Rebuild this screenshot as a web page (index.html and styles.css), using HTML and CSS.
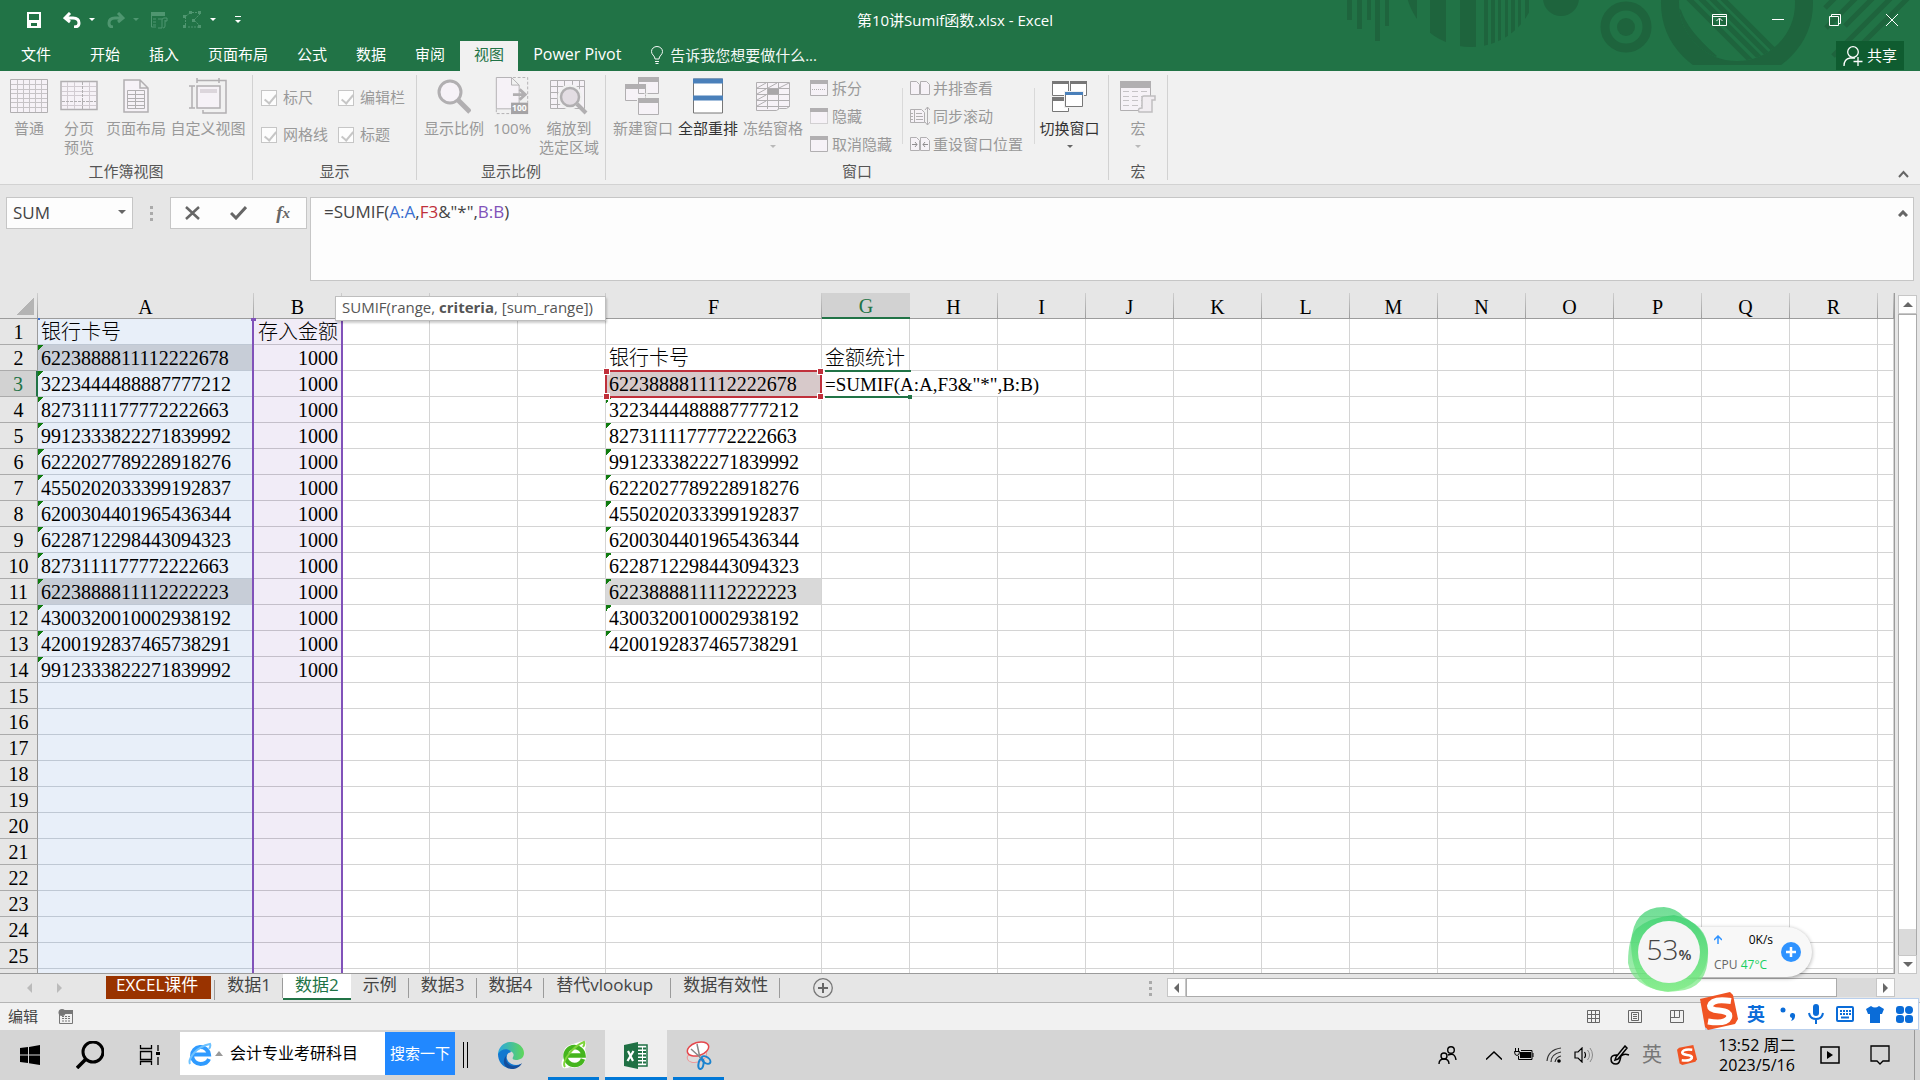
FILE: index.html
```html
<!DOCTYPE html>
<html lang="zh-CN">
<head>
<meta charset="utf-8">
<title>第10讲Sumif函数.xlsx - Excel</title>
<link rel="stylesheet" href="styles.css">
</head>
<body>
<header class="head">
  <svg class="head-art" width="580" height="65" viewBox="1340 0 580 65" aria-hidden="true">
    <defs>
      <clipPath id="disc"><circle cx="1471" cy="-19" r="66"/></clipPath>
      <clipPath id="hole"><circle cx="1737" cy="3" r="58"/></clipPath>
    </defs>
    <g fill="#1e643d">
      <path d="M1347 0h5v20h-5zM1357 0h5v29h-5zM1367 0h4v20h-4zM1375 0h5v41h-5zM1385 0h4v26h-4z"/>
      <path clip-path="url(#disc)" d="M1400 0h17v50h-17zM1430 0h16v50h-16zM1460 0h16v50h-16zM1484 0h4v50h-4zM1491 0h4v50h-4zM1498 0h3v50h-3zM1505 0h3v50h-3zM1511 0h4v50h-4zM1518 0h3v50h-3zM1525 0h4v50h-4z"/>
      <circle cx="1561" cy="-2" r="18"/>
      <circle cx="1626" cy="27" r="9"/>
    </g>
    <g fill="none" stroke="#1e643d">
      <circle cx="1626" cy="27" r="21" stroke-width="9"/>
      <circle cx="1737" cy="3" r="67" stroke-width="18"/>
      <g clip-path="url(#hole)">
        <path stroke-width="5" d="M1686 -4l66 66M1698 -4l66 66M1709 -4l66 66M1720 -4l66 66"/>
        <path stroke="none" fill="#1e643d" d="M1670 0l11 10q6 20 36 46l-20 14-30-40z"/>
      </g>
      <path stroke-width="5" d="M1825 8l10-10M1826 28l30-30M1845 26l28-28M1833 56l60-60M1850 56l60-60"/>
    </g>
  </svg>
  <div class="title-row">
    <nav class="qat" aria-label="快速访问工具栏">
      <button class="q-save" aria-label="保存"><svg width="14" height="16" viewBox="0 0 14 16"><path fill="none" stroke="#fff" stroke-width="2" d="M1 1h12v14H1zM1 9h12"/><path fill="#fff" d="M1 9h12v6h-3v-4H4v4H1z"/></svg></button>
      <button class="q-undo" aria-label="撤消"><svg width="18" height="16" viewBox="0 0 18 16"><path fill="none" stroke="#fff" stroke-width="3" d="M7 1L2 6l5 4M2 6h8q6 0 6 5 0 4-5 4"/></svg><i class="tri"></i></button>
      <button class="q-redo" aria-label="恢复"><svg width="18" height="16" viewBox="0 0 18 16"><path fill="none" stroke="#4f9670" stroke-width="3" d="M11 1l5 5-5 4M16 6H8q-6 0-6 5 0 4 4 4"/></svg><i class="tri dim"></i></button>
      <button class="q-form" aria-label="记录单"><svg width="17" height="18" viewBox="0 0 17 18"><path fill="#4f9670" d="M0 1h14v4H0z"/><path fill="none" stroke="#4f9670" d="M.5 5v11H5M2 8h3M2 11h3M2 14h3M7 8h4M13 7h3v3h-2M13 7q-2 0-2 2v8h-4M14 9v6q0 2-2 2"/></svg></button>
      <button class="q-shape" aria-label="选择对象"><svg width="20" height="18" viewBox="0 0 20 18"><path fill="none" stroke="#4f9670" stroke-dasharray="2 1" d="M6 1.500h10M2.500 6v9M5 16h10M3 5l4-3M17 3l-6 6 6 6"/><path fill="#4f9670" d="M6 0h3v3H6zM15 0h3v3h-3zM0 4h3v3H0zM0 14h3v3H0zM15 14h3v3h-3zM9 8h3v3H9z"/></svg><i class="tri"></i></button>
      <button class="q-more" aria-label="自定义快速访问工具栏"><i class="bar"></i><i class="tri"></i></button>
    </nav>
    <h1 class="doc-title">第10讲Sumif函数.xlsx - Excel</h1>
    <div class="win-btns">
      <button aria-label="功能区显示选项"><svg width="15" height="12" viewBox="0 0 15 12"><path fill="none" stroke="#fff" d="M.5.500h14v11H.5zM0 2.500h15M7.500 11V4.500M4.500 7l3-3 3 3"/></svg></button>
      <button aria-label="最小化"><svg width="12" height="12" viewBox="0 0 12 12"><path stroke="#fff" d="M0 5.500h12"/></svg></button>
      <button aria-label="向下还原"><svg width="12" height="12" viewBox="0 0 12 12"><path fill="none" stroke="#fff" d="M.5 2.500h9v9h-9zM2.500 2V.500h9v9H10"/></svg></button>
      <button aria-label="关闭"><svg width="12" height="12" viewBox="0 0 12 12"><path stroke="#fff" d="M0 0l12 12M12 0L0 12"/></svg></button>
    </div>
  </div>
  <div class="tab-row">
    <nav class="tabs" aria-label="功能区选项卡">
      <button class="tab file">文件</button><button class="tab">开始</button><button class="tab">插入</button><button class="tab">页面布局</button><button class="tab">公式</button><button class="tab">数据</button><button class="tab">审阅</button><button class="tab on">视图</button><button class="tab latin">Power Pivot</button>
    </nav>
    <button class="tell"><svg width="12" height="18" viewBox="0 0 12 18"><path fill="none" stroke="#fff" d="M4 13q0-2-2-4Q.5 7.500.500 5.500a5.500 5 0 0 1 11 0q0 2-1.500 3.500-2 2-2 4zM4 15.500h4M4.500 17.500h3"/></svg>告诉我您想要做什么...</button>
    <button class="share"><svg width="20" height="20" viewBox="0 0 20 20"><path fill="none" stroke="#fff" stroke-width="1.300" d="M1 20q0-7 6-8h5M15 11v9M10.500 15.500h9"/><circle cx="10" cy="6" r="5.300" fill="none" stroke="#fff" stroke-width="1.300"/></svg>共享</button>
  </div>
</header>

<section class="ribbon" aria-label="视图">
  <div class="group g-views">
    <div class="body">
      <button class="big w50" disabled><svg width="38" height="34" viewBox="0 0 38 34"><path fill="#f6f2f7" stroke="#b1afb1" d="M.5.500h37v33H.5z"/><path stroke="#c6c3c6" d="M7.500 1v32M13.500 1v32M19.500 1v32M25.500 1v32M31.500 1v32M1 5.500h36M1 10.500h36M1 14.500h36M1 19.500h36M1 23.500h36M1 28.500h36"/></svg><span>普通</span></button>
      <button class="big w50" disabled><svg width="38" height="34" viewBox="0 0 38 34"><path fill="#f6f2f7" stroke="#b1afb1" stroke-width="1.500" d="M1 2.500h36v28H1z"/><path stroke="#d2ccd2" d="M7.500 3v27M14.500 3v27M29.500 3v27M2 7.500h34M2 12.500h34M2 16.500h34M2 26.500h34"/><path stroke="#b1afb1" stroke-dasharray="3 1" d="M22.500 3v27M2 22.500h34"/></svg><span>分页<br>预览</span></button>
      <button class="big w64" disabled><svg width="26" height="34" viewBox="0 0 26 34"><path fill="#f6f2f7" stroke="#b1afb1" stroke-width="1.500" d="M1 1h16l8 8v24H1zM17 1v8h8"/><path fill="none" stroke="#b1afb1" d="M4.500 11.500h17v18h-17zM12.500 11v19M4 15.500h18M4 19.500h18M4 22.500h18M4 26.500h18"/></svg><span>页面布局</span></button>
      <button class="big w80" disabled><svg width="38" height="36" viewBox="0 0 38 36"><path fill="#f6f2f7" stroke="#b1afb1" stroke-width="1.500" d="M8 8h23v22H8z"/><path fill="#dcd6dc" d="M11 11h17v4H11z"/><path fill="none" stroke="#b1afb1" stroke-width="1.500" d="M8 2.500h22M8 0v5M30 0v5M3 8v22M0 8h6M0 30h6M30 2.500h7V35H14v-3"/></svg><span>自定义视图</span></button>
    </div>
    <h2>工作簿视图</h2>
  </div>
  <div class="group g-show">
    <div class="body checks">
      <label><input type="checkbox" checked disabled>标尺</label>
      <label><input type="checkbox" checked disabled>编辑栏</label>
      <label><input type="checkbox" checked disabled>网格线</label>
      <label><input type="checkbox" checked disabled>标题</label>
    </div>
    <h2>显示</h2>
  </div>
  <div class="group g-zoom">
    <div class="body">
      <button class="big w66" disabled><svg width="34" height="34" viewBox="0 0 34 34"><circle cx="13" cy="13" r="11" fill="#f6f2f7" stroke="#b1afb1" stroke-width="3"/><path stroke="#b1afb1" stroke-width="5" d="M20 20l13 13"/></svg><span>显示比例</span></button>
      <button class="big w50" disabled><svg width="34" height="40" viewBox="0 0 34 40"><path fill="#f6f2f7" stroke="#b1afb1" d="M.5.500h16l8 8V33.500H.5zM16.500.500v8h8"/><path fill="none" stroke="#b1afb1" stroke-dasharray="3 2" d="M18 .5h15.500V27M.5 34v4.500H17"/><path fill="none" stroke="#b1afb1" stroke-width="3" d="M18 18.500h12M25 13l6 5.500-6 5.500"/><path fill="#a5a3a5" d="M16 27h18v12H16z"/><text x="17" y="36" class="ico-num">100</text></svg><span>100%</span></button>
      <button class="big w64" disabled><svg width="38" height="36" viewBox="0 0 38 36"><path fill="#f6f2f7" stroke="#b1afb1" d="M.5 2.500h34v28H.5zM7.500 3v27M14.500 3v8M22.500 3v8M29.500 3v9M1 8.500h33M1 14.500h10M1 20.500h9M1 26.500h10"/><circle cx="20" cy="19" r="9.500" fill="#ebe6eb" stroke="#f1f1f1" stroke-width="6"/><circle cx="20" cy="19" r="9" fill="#e3dde3" stroke="#b1afb1" stroke-width="2.500"/><path stroke="#b1afb1" stroke-width="4" d="M27 26l9 9"/></svg><span>缩放到<br>选定区域</span></button>
    </div>
    <h2>显示比例</h2>
  </div>
  <div class="group g-window">
    <div class="body">
      <button class="big w66" disabled><svg width="36" height="38" viewBox="0 0 36 38"><path fill="#f6f2f7" stroke="#b1afb1" d="M13.500.500h20v16h-20zM.5 7.500h20v16H.5zM13.500 21.500h20v16h-20z"/><path fill="#b1afb1" d="M13 0h21v5H13zM0 7h21v5H0zM13 21h21v5H13z"/><path fill="none" stroke="#f1f1f1" d="M22 6v11h-3M12.500 25v-5H35"/></svg><span>新建窗口</span></button>
      <button class="big w64 live"><svg width="30" height="35" viewBox="0 0 30 35"><path fill="#fff" stroke="#777" d="M.5.500h29v34H.5z"/><path fill="#4a80ba" d="M0 0h30v5H0zM0 17h30v5H0z"/></svg><span>全部重排</span></button>
      <button class="big w66" disabled><svg width="34" height="34" viewBox="0 0 34 34"><path fill="#f6f2f7" stroke="#b1afb1" d="M.5 3.500h33v24l-3 2h-7l-3 2H.5zM11.500 4v26M22.500 4v26M0 9.500h34M0 15.500h34M0 21.500h34M0 27.500h34"/><path fill="none" stroke="#b1afb1" d="M1 9l9-5M12 9l9-5M23 9l10-5M1 15l9-5M1 21l9-5M1 27l9-5"/><path fill="#a9a7a9" d="M12 10h11v5H12z"/></svg><span>冻结窗格</span><i class="tri grey"></i></button>
      <div class="smalls">
        <button disabled><svg width="18" height="16" viewBox="0 0 18 16"><path fill="#f6f2f7" stroke="#b1afb1" d="M.5.500h17v15H.5z"/><path fill="#b1afb1" d="M0 0h18v4H0z"/><path stroke="#b1afb1" stroke-dasharray="1 1" d="M2 9.500h14"/></svg>拆分</button>
        <button disabled><svg width="18" height="16" viewBox="0 0 18 16"><path fill="#f6f2f7" stroke="#b1afb1" stroke-dasharray="1 1" d="M.5.500h17v15H.5z"/><path fill="#b1afb1" d="M0 0h18v4H0z"/></svg>隐藏</button>
        <button disabled><svg width="18" height="16" viewBox="0 0 18 16"><path fill="#f6f2f7" stroke="#b1afb1" d="M.5.500h17v15H.5z"/><path fill="#b1afb1" d="M0 0h18v4H0z"/></svg>取消隐藏</button>
      </div>
      <div class="smalls wide">
        <button disabled><svg width="20" height="16" viewBox="0 0 20 16"><path fill="#f6f2f7" stroke="#b1afb1" d="M.5 1.500h6l3 3v10h-9zM10.500 1.500h6l3 3v10h-9z"/></svg>并排查看</button>
        <button disabled><svg width="20" height="20" viewBox="0 0 20 20"><path fill="#f6f2f7" stroke="#b1afb1" d="M.5 3.500h11l3 3v10H.5zM4.500 4v13M6 7.500h6M6 10.500h7M6 13.500h7M1 7.500h2M1 10.500h2M1 13.500h2M17.500 1v18M15 4l2.500-3L20 4M15 16l2.500 3 2.500-3"/></svg>同步滚动</button>
        <button disabled><svg width="20" height="16" viewBox="0 0 20 16"><path fill="#f6f2f7" stroke="#b1afb1" d="M.5 1.500h6l3 3v10h-9zM10.500 1.500h6l3 3v10h-9z"/><path fill="none" stroke="#8f8d8f" d="M2 8.500h5M5 6l2 2.500L5 11M18 8.500h-5M15 6l-2 2.500 2 2.500"/></svg>重设窗口位置</button>
      </div>
      <button class="big w70 live"><svg width="36" height="34" viewBox="0 0 36 34"><path fill="#fff" stroke="#777" d="M.5 2.500h16v14H.5zM18.500 2.500h16v14h-16zM.5 18.500h16v14H.5z"/><path fill="#777" d="M0 2h17v3H0zM18 2h17v3H18zM0 18h17v4H0z"/><path fill="#fff" stroke="#f1f1f1" stroke-width="3" d="M13.500 13.500h17v14h-17z"/><path fill="#fff" stroke="#777" d="M13.500 13.500h17v14h-17z"/><path fill="#4a80ba" d="M13 13h18v3H13z"/></svg><span>切换窗口</span><i class="tri dark"></i></button>
    </div>
    <h2>窗口</h2>
  </div>
  <div class="group g-macro">
    <div class="body">
      <button class="big w50" disabled><svg width="36" height="34" viewBox="0 0 36 34"><path fill="#f6f2f7" stroke="#b1afb1" d="M.5 2.500h30v29H.5z"/><path fill="#b1afb1" d="M0 2h31v7H0z"/><path stroke="#c6c3c6" stroke-dasharray="6 3" d="M3 12.500h26M3 17.500h26M3 21.500h26M3 26.500h26"/><path fill="#f1edf1" stroke="#c0bec0" stroke-width="1.500" d="M22 29V19q0-2 2-2h11v4h-3v12H19q-2-4 3-4z"/></svg><span>宏</span><i class="tri grey"></i></button>
    </div>
    <h2>宏</h2>
  </div>
  <button class="collapse" aria-label="折叠功能区"><svg width="11" height="8" viewBox="0 0 11 8"><path fill="none" stroke="#666" stroke-width="2" d="M1 7l4.500-5L10 7"/></svg></button>
</section>

<section class="formula-row">
  <div class="namebox"><input type="text" value="SUM" aria-label="名称框"><i class="tri dark"></i></div>
  <span class="dots"></span>
  <div class="fx-btns">
    <button aria-label="取消"><svg width="15" height="14" viewBox="0 0 15 14"><path stroke="#666" stroke-width="2.500" d="M1 1l13 12M14 1L1 13"/></svg></button>
    <button aria-label="输入"><svg width="17" height="14" viewBox="0 0 17 14"><path fill="none" stroke="#666" stroke-width="3" d="M1 7l5 5L16 1"/></svg></button>
    <button aria-label="插入函数" class="fx">f<sub>x</sub></button>
  </div>
  <div class="formula" role="textbox" aria-label="编辑栏"><p>=SUMIF(<b class="r1">A:A</b>,<b class="r2">F3</b>&amp;"*",<b class="r3">B:B</b>)</p>
    <button aria-label="折叠编辑栏"><svg width="10" height="7" viewBox="0 0 10 7"><path fill="none" stroke="#666" stroke-width="3" d="M1 6l4-4 4 4"/></svg></button></div>
</section>

<main class="work">
  <div class="sheet">
    <table class="cells" id="cells"></table>
    <i class="range ra"></i><i class="range rb"></i>
    <i class="range rf"><b></b><b></b><b></b><b></b></i><i class="range rg"></i>
    <div class="hint" role="tooltip">SUMIF(range, <b>criteria</b>, [sum_range])</div>
  </div>
  <div class="vscroll"><button aria-label="向上滚动"><i class="up"></i></button><span class="thumb"></span><button aria-label="向下滚动"><i class="down"></i></button></div>
</main>

<nav class="sheets" aria-label="工作表">
  <span class="nav-arrows"><i class="left"></i><i class="right"></i></span>
  <button class="st red">EXCEL课件</button><button class="st">数据1</button><button class="st on">数据2</button><button class="st">示例</button><button class="st">数据3</button><button class="st">数据4</button><button class="st long">替代vlookup</button><button class="st">数据有效性</button>
  <button class="add" aria-label="新工作表"><svg width="20" height="20" viewBox="0 0 20 20"><circle cx="10" cy="10" r="9.300" fill="none" stroke="#777" stroke-width="1.300"/><path stroke="#666" stroke-width="2" d="M5 10h10M10 5v10"/></svg></button>
  <span class="dots"></span>
  <div class="hscroll"><button aria-label="向左滚动"><i class="left"></i></button><span class="thumb"></span><button aria-label="向右滚动"><i class="right"></i></button></div>
</nav>

<footer class="status">
  <span>编辑</span>
  <svg width="16" height="15" viewBox="0 0 16 15"><path fill="none" stroke="#777" d="M1.500 3v11.500h13V1.500H8"/><path fill="#777" d="M6 1h9v4H6z"/><path stroke="#777" stroke-dasharray="2 1" d="M4 7.500h9M4 9.500h9M4 12h9"/><circle cx="4" cy="3.500" r="3.500" fill="#777"/></svg>
  <div class="view-btns">
    <button aria-label="普通"><svg width="13" height="13" viewBox="0 0 13 13"><path fill="none" stroke="#666" d="M.5.500h12v12H.5zM4.500 0v13M8.500 0v13M0 4.500h13M0 8.500h13"/></svg></button>
    <button aria-label="页面布局"><svg width="14" height="13" viewBox="0 0 14 13"><path fill="none" stroke="#666" d="M.5.500h13v12H.5zM3.500 2.500h7v8h-7zM5 4.500h4M5 6.500h4M5 8.500h4"/></svg></button>
    <button aria-label="分页预览"><svg width="14" height="13" viewBox="0 0 14 13"><path fill="none" stroke="#666" d="M.5.500h13v12H.5zM4.500 0v7.500M0 7.500h9.500V0"/></svg></button>
  </div>
</footer>

<footer class="taskbar">
  <button class="t-start" aria-label="开始"><svg width="20" height="20" viewBox="0 0 20 20"><path d="M0 3l8-1v7.500H0zM9 1.900L20 0v9.500H9zM0 10.500h8V18l-8-1zM9 10.500h11V20L9 18.200z"/></svg></button>
  <button class="t-find" aria-label="搜索"><svg width="28" height="28" viewBox="0 0 28 28"><circle cx="17" cy="11" r="10" fill="none" stroke="#000" stroke-width="3"/><path stroke="#000" stroke-width="3.500" d="M9.500 18.500L1 27"/></svg></button>
  <button class="t-view" aria-label="任务视图"><svg width="22" height="20" viewBox="0 0 22 20"><path fill="none" stroke="#000" stroke-width="1.300" d="M1.500 0v3.500h11V0M1.500 6.500h11v8h-11zM1.500 20v-3.500h11V20M19 0v6M19 12v8"/><path d="M17 7h4v3h-4z"/></svg></button>
  <form class="websearch">
    <svg width="24" height="24" viewBox="0 0 24 24"><path fill="none" stroke="#2f9bff" stroke-width="4" d="M21 17q-2 5-8.500 5A8.500 8.500 0 1 1 21 12.500H6"/><path fill="none" stroke="#6dc2ff" stroke-width="2" d="M2 22q-2-4 4-11T22 2q1 2-1 5"/></svg>
    <i class="up"></i>
    <input type="text" value="会计专业考研科目" aria-label="搜索">
    <button type="button">搜索一下</button>
  </form>
  <span class="grip"></span>
  <button class="app edge" aria-label="Edge"><svg width="26" height="30" viewBox="0 0 26 28"><defs><linearGradient id="eg" x1="0" x2="1"><stop offset="0" stop-color="#2aa7e0"/><stop offset="1" stop-color="#5fd75a"/></linearGradient></defs><path fill="url(#eg)" d="M0 14C0 6 6 1 13 1s13 5 13 11c0 5-4 7-8 7-3 0-4-1-3-3 2-3-1-6-4-6-5 0-9 2-11 4z"/><path fill="#1278d0" d="M0 13c3-6 11-6 13-2-4 1-5 4-4 7 2 6 9 7 14 5-3 4-8 5-12 4C4 26 0 20 0 13z"/><path fill="#154f9c" d="M9 14c-3 5 1 11 7 11 3 0 6-1 8-3-2 4-6 6-10 6-8 0-11-9-5-14z"/></svg></button>
  <button class="app run" aria-label="360浏览器"><svg width="26" height="30" viewBox="0 0 26 30"><path fill="#fff" d="M2 28Q-1 24 2 18 1 6 12 4 20 1 24 1q2 3 0 8 3 8-1 14-7 7-14 4-4 2-7 1z"/><path fill="none" stroke="#45b51e" stroke-width="4.500" d="M22 19q-2 6-8.500 6a9 9 0 1 1 9-9.500H7"/><path fill="none" stroke="#7ed43b" stroke-width="2" d="M4 27q-3-4 4-13T23 2q1 2-1 5"/></svg></button>
  <button class="app run active" aria-label="Excel"><svg width="24" height="27" viewBox="0 0 24 27"><path fill="#fff" stroke="#1f7044" stroke-width="1.500" d="M13 3h10v21H13z"/><path stroke="#1f7044" stroke-width="2" stroke-dasharray="4 1" d="M14 6.500h8M14 10h8M14 13.500h8M14 17h8M14 20.500h8"/><path fill="#1f7044" d="M0 3l14-3v27L0 24z"/><path stroke="#fff" stroke-width="2.200" d="M4 9l5 10M9.500 9l-6 10"/></svg></button>
  <button class="app run" aria-label="截图工具"><svg width="26" height="29" viewBox="0 0 26 29"><ellipse cx="11" cy="15" rx="10" ry="6" fill="#ddd" stroke="#e99" transform="rotate(-18 11 15)"/><ellipse cx="12" cy="8" rx="11" ry="6.500" fill="#fff" stroke="#e5484d" stroke-width="1.500" transform="rotate(-18 12 8)"/><path stroke="#888" stroke-width="1.500" d="M5 8l10 9M11 3l3 14"/><ellipse cx="20" cy="19" rx="5" ry="3" fill="none" stroke="#1b83cf" stroke-width="2" transform="rotate(35 20 19)"/><ellipse cx="15" cy="23" rx="2.500" ry="5" fill="none" stroke="#1b83cf" stroke-width="2" transform="rotate(10 15 23)"/></svg></button>
  <div class="tray">
    <button class="p-people" aria-label="人脉"><svg width="20" height="20" viewBox="0 0 20 20"><g fill="none" stroke="#000" stroke-width="1.400"><circle cx="13" cy="5" r="3.300"/><circle cx="6" cy="11" r="3"/><path d="M1 19q0-5 5-5t5 5M10 10q7-3 8 5"/></g></svg></button>
    <button aria-label="显示隐藏的图标"><svg width="16" height="9" viewBox="0 0 16 9"><path fill="none" stroke="#000" stroke-width="1.500" d="M0 8.500L8 1l8 7.500"/></svg></button>
    <button aria-label="电池"><svg width="20" height="14" viewBox="0 0 20 14"><path d="M6 4h11v6H6z"/><path fill="none" stroke="#000" d="M7 2.500h11v9H4.500V8M19 5v4M1.500 0v3M4.500 0v3M.5 3.500h5q0 4-2.500 4T.5 3.500"/></svg></button>
    <button aria-label="网络"><svg width="16" height="16" viewBox="0 0 16 16"><g fill="none" stroke="#333" stroke-width="1.200"><path d="M1 14Q2 3 15 1M5 15Q5 7 15 5M9 15q1-5 6-6"/></g><circle cx="13" cy="14" r="1.800"/></svg></button>
    <button aria-label="音量"><svg width="20" height="16" viewBox="0 0 20 16"><path fill="none" stroke="#000" stroke-width="1.200" d="M1 5h3l4-4v14l-4-4H1zM10.500 5q2 3 0 6"/><path fill="none" stroke="#888" d="M13.500 3q4 5 0 10M16 1q5 7 0 14"/></svg></button>
    <button class="p-pen" aria-label="手写笔"><svg width="20" height="20" viewBox="0 0 20 20"><path fill="none" stroke="#000" stroke-width="1.500" d="M6 12L15 1l2 2-9 11-3 1zM7 10q-6 0-6 4 0 5 5 5 3 0 4-4l1-4q3-3 8-1"/></svg></button>
    <span class="p-lang">英</span>
    <button class="p-sogou" aria-label="搜狗输入法"><svg width="20" height="20" viewBox="0 0 38 38"><path fill="#f05423" d="M4 5L31 0l7 27-3 5-25 6-5-3L0 9z"/><path fill="none" stroke="#fff" stroke-width="5" d="M29 9Q12 7 10 14q0 4 9 5 11 1 9 6-3 6-19 4"/></svg></button>
    <time>13:52 周二<br>2023/5/16</time>
    <button class="p-play" aria-label="播放"><svg width="20" height="18" viewBox="0 0 20 18"><path fill="none" stroke="#000" stroke-width="1.500" d="M1 1h18v16H1z"/><path d="M7 5l6 4-6 4z"/></svg></button>
    <button class="p-note" aria-label="通知"><svg width="20" height="20" viewBox="0 0 20 20"><path fill="none" stroke="#000" stroke-width="1.300" d="M1 1h18v15h-6l-3 3-3-3H1z"/></svg></button>
    <i class="desk"></i>
  </div>
</footer>

<aside class="meter">
  <svg class="blob" width="82" height="86" viewBox="0 0 82 86"><defs><linearGradient id="mg" x1="0" x2="0" y1="0" y2="1"><stop offset="0" stop-color="#36cf6c"/><stop offset="1" stop-color="#7ceb82"/></linearGradient></defs><g fill="url(#mg)"><path opacity=".7" d="M3 36Q5 0 36 0q12 1 20 10 22 12 24 32 2 40-30 42Q4 90 3 36z"/><path opacity=".65" d="M8 22q14-12 38-14 34 8 34 36-1 36-40 41Q4 80 0 56q0-24 8-34z"/></g><circle cx="41" cy="45" r="31" fill="#f5f5f5"/></svg>
  <span class="load">53<small>%</small></span>
  <div class="pill"><svg width="8" height="9" viewBox="0 0 8 9"><path fill="none" stroke="#2f93ff" stroke-width="1.500" d="M4 9V1M0 5l4-4 4 4"/></svg><span class="net">0K/s</span><span class="cpu">CPU <b>47°C</b></span><button aria-label="加速"><svg width="20" height="20" viewBox="0 0 20 20"><circle cx="10" cy="10" r="10" fill="#2f93ff"/><path stroke="#fff" stroke-width="2.500" d="M5 10h10M10 5v10"/></svg></button></div>
</aside>

<aside class="ime">
  <svg class="logo" width="40" height="38" viewBox="0 0 38 38"><path fill="#f05423" d="M0 7L30 0l3 3 5 24-3 5-27 6-3-3z"/><path fill="none" stroke="#fff" stroke-width="6" d="M31 9Q12 6 10 14q0 4 9 4.500 12 1 10 7-3 7-21 4"/></svg>
  <button class="zh">英</button>
  <button aria-label="标点"><svg width="16" height="14" viewBox="0 0 16 14"><circle cx="3" cy="3" r="2.500" fill="#0a6cd8"/><path fill="#0a6cd8" d="M13 6a2.500 2.500 0 0 1 2 3q0 4-4 5 1-1 1-3a2.500 2.500 0 0 1 1-5z"/></svg></button>
  <button aria-label="语音"><svg width="16" height="20" viewBox="0 0 16 20"><rect x="5" width="6" height="12" rx="3" fill="#0a6cd8"/><path fill="none" stroke="#0a6cd8" stroke-width="2" d="M1 9q1 6 7 6t7-6M8 15v5"/></svg></button>
  <button aria-label="键盘"><svg width="18" height="16" viewBox="0 0 18 16"><rect x="1" y="1" width="16" height="14" rx="1" fill="none" stroke="#0a6cd8" stroke-width="2"/><path stroke="#0a6cd8" stroke-width="2" stroke-dasharray="2 1" d="M4 5h11M4 8h11"/><path stroke="#0a6cd8" stroke-width="2" d="M5 11.500h8"/></svg></button>
  <button aria-label="皮肤"><svg width="18" height="17" viewBox="0 0 18 17"><path fill="#0a6cd8" d="M5 0q4 3 8 0l5 3-2 5h-2v9H4V8H2L0 3z"/></svg></button>
  <button aria-label="工具箱"><svg width="17" height="17" viewBox="0 0 17 17"><g fill="#0a6cd8"><rect width="8" height="8" rx="3"/><rect x="9" width="8" height="8" rx="4"/><rect y="9" width="8" height="8" rx="3"/><rect x="9" y="9" width="8" height="8" rx="3"/></g></svg></button>
</aside>
<script src="sheet.js"></script>
</body>
</html>
```

FILE: styles.css
```css
* { box-sizing: border-box; }
html, body { height: 100%; }
body {
  margin: 0;
  display: flex;
  flex-direction: column;
  overflow: hidden;
  background: #e6e6e6;
  color: #444;
  font: 15px/19px "Open Sans", "Noto Sans CJK SC", sans-serif;
}
button, input { font: inherit; color: inherit; border: 0; padding: 0; background: none; }
button { display: flex; align-items: center; white-space: nowrap; }
svg { display: block; flex: none; }
h1, h2, p { margin: 0; font-size: inherit; font-weight: 400; }

/* small arrows */
.tri, .up, .down, .left, .right { display: block; width: 0; height: 0; border: 4px solid transparent; }
.tri { border-width: 3px 3px 0; border-top-color: #fff; }
.tri.dim { border-top-color: #4f9670; }
.tri.grey { border-top-color: #b9b9b9; }
.tri.dark { border-top-color: #666; }
.up { border-width: 0 5px 5px; border-bottom-color: #666; }
.down { border-width: 5px 5px 0; border-top-color: #666; }
.left { border-width: 5px 5px 5px 0; border-right-color: #666; }
.right { border-width: 5px 0 5px 5px; border-left-color: #666; }

/* title bar and tabs */
.head { position: relative; background: #217346; color: #fff; }
.head-art { position: absolute; right: 0; top: 0; }
.title-row { position: relative; display: grid; grid-template-columns: 1fr auto 1fr; align-items: center; height: 41px; padding: 0 22px 2px 0; }
.qat { display: flex; align-items: center; padding-left: 27px; }
.qat button { gap: 8px; }
.q-save { margin-right: 22px; }
.q-undo { margin-right: 12px; }
.q-redo { margin-right: 12px; }
.q-form { margin-right: 15px; }
.q-shape { margin-right: 19px; }
.qat .q-shape { gap: 7px; }
.qat .q-more { flex-direction: column; gap: 3px; }
.bar { width: 6px; height: 1px; background: #fff; }
.doc-title { padding-left: 12px; line-height: 22px; font-size: 15px; }
.win-btns { display: flex; justify-content: flex-end; gap: 45px; }
.tab-row { position: relative; display: flex; height: 30px; }
.tabs { display: flex; gap: 1px; }
.tab { padding: 0 14px 4px; height: 30px; }
.tab.file { padding: 0 24px 4px 21px; }
.tab.on { background: #f1f1f1; color: #217346; }
.tab.latin { width: 116px; font-size: 16px; }
.tell { margin-left: 16px; padding-bottom: 2px; gap: 7px; opacity: .95; }
.share { margin: 0 16px 1px auto; padding: 0 7px; gap: 4px; background: #0f5c30; }

/* ribbon */
.ribbon { display: flex; height: 114px; background: #f1f1f1; border-bottom: 1px solid #d2d2d2; position: relative; }
.group { display: flex; flex-direction: column; margin: 4px 0; padding: 0 4px; border-right: 1px solid #d2d2d2; }
.body { display: flex; height: 88px; }
.group h2 { text-align: center; color: #555; padding-top: 4px; line-height: 18px; }
.big { flex-direction: column; justify-content: flex-start; color: #999; padding-top: 2px; }
.big svg { height: 38px; margin-bottom: 4px; }
.big span { line-height: 19px; text-align: center; }
.big .tri { margin-top: 7px; }
.big.live { color: #333; }
.w50 { width: 50px; }
.w64 { width: 64px; }
.w66 { width: 66px; }
.w70 { width: 70px; }
.w80 { width: 80px; }
.ico-num { font: 700 9px "Open Sans", sans-serif; fill: #fff; }
.checks { display: grid; grid-template-columns: 77px 68px; grid-auto-rows: 37px; padding: 4px 6px 0 4px; }
.checks label { display: flex; align-items: center; gap: 6px; color: #999; white-space: nowrap; }
.checks input { appearance: none; position: relative; width: 16px; height: 16px; margin: 0; border: 1px solid #c6c6c6; background: #fdfdfd; }
.checks input::after { content: ""; position: absolute; left: 5px; top: 1px; width: 5px; height: 10px; border: solid #c6c6c6; border-width: 0 2px 2px 0; transform: rotate(40deg); }
.smalls { display: flex; flex-direction: column; gap: 2px; padding: 0 10px 0 4px; }
.smalls button { height: 26px; gap: 4px; color: #999; }
.smalls.wide { padding: 0; }
.smalls.wide button { gap: 3px; padding: 0 11px 0 7px; }
.smalls + .smalls, .smalls + .big { border-left: 1px solid transparent; border-image: linear-gradient(transparent 14px, #d9d9d9 14px, #d9d9d9 68px, transparent 68px) 1; }
.collapse { margin: auto 11px 6px auto; }

/* formula bar */
.formula-row { display: flex; align-items: flex-start; height: 108px; padding: 12px 6px; }
.namebox, .fx-btns, .formula { border: 1px solid #c6c6c6; background: #fdfdfd; }
.namebox { display: flex; align-items: center; width: 127px; height: 32px; padding: 0 6px 2px; }
.namebox input { flex: 1; min-width: 0; font-size: 17px; }
.namebox .tri { border-width: 4px 4px 0; }
.dots { width: 3px; height: 15px; background: repeating-linear-gradient(#aaa 0 3px, transparent 3px 6px); }
.formula-row .dots { margin: 9px 17px 0; }
.fx-btns { display: flex; align-items: center; justify-content: space-between; width: 137px; height: 32px; padding: 0 16px 0 14px; }
.fx { font: italic 700 19px/24px "Liberation Serif", serif; color: #666; }
.fx sub { font-size: 15px; line-height: 12px; }
.formula { flex: 1; display: flex; justify-content: space-between; align-items: flex-start; height: 84px; margin-left: 3px; padding: 2px 5px 0 13px; font-size: 17px; line-height: 24px; }
.formula b { font-weight: 400; }
.formula button { padding-top: 10px; }
.r1 { color: #3a6fd0; }
.r2 { color: #c0303b; }
.r3 { color: #8152b9; }

/* sheet */
.work { flex: 1; min-height: 0; display: flex; }
.sheet { position: relative; flex: 1; min-width: 0; overflow: hidden; border-bottom: 1px solid #9b9b9b; }
.cells {
  width: 100%;
  table-layout: fixed;
  border-collapse: separate;
  border-spacing: 0;
  border-right: 1px solid #9b9b9b;
  font: 300 20px/23px "Liberation Serif", "Noto Sans CJK SC", serif;
  color: #000;
}
.c-head { width: 38px; }
.c-wide { width: 216px; }
.c-std { width: 88px; }
.cells th, .cells td { height: 26px; padding: 2px 0 0; white-space: nowrap; overflow: visible; }
.cells th { font-weight: 400; text-align: center; background: #e6e6e6; }
.cells thead th { border-right: 1px solid; border-bottom: 1px solid #9b9b9b; border-image: linear-gradient(#d0d0d0, #9b9b9b) 1; padding-top: 3px; line-height: 22px; }
.cells tbody th { border-right: 1px solid #9b9b9b; border-bottom: 1px solid #ababab; }
.cells thead .hot { background: #d2d2d2; color: #217346; border: 0; border-bottom: 2px solid #217346; line-height: 21px; }
.cells tbody .hot { background: #d2d2d2; color: #217346; border-right: 2px solid #217346; }
.cells thead .corner { padding: 0; }
.corner i { display: block; width: 18px; height: 18px; margin: 4px 0 3px 16px; background: linear-gradient(135deg, transparent 50%, #b4b4b4 50%); }
.cells td { background-color: #fff; border: solid #d4d4d4; border-width: 0 1px 1px 0; padding: 2px 3px 0; }
.cells td.a { background-color: #e8eff9; border-color: #bfc8d4; }
.cells td.b { background-color: #f1ecf7; border-color: #c4bfca; text-align: right; }
.cells td.dup { background-color: #d9d9d9; }
.cells td.a.dup { background-color: #c7cdd7; }
.cells td.pick { background-color: #d7c9ca; }
.cells td.txt { background-image: linear-gradient(135deg, #107c10 50%, transparent 50%); background-size: 6px 6px; background-repeat: no-repeat; }
.cells td.edit { font-size: 19px; }
.range { position: absolute; }
.ra { left: 38px; top: 26px; bottom: 0; width: 216px; border-right: 2px solid #8152b9; }
.ra::before { content: ""; position: absolute; left: 0; top: -1px; width: 2px; height: 2px; background: #3a6fd0; }
.rb { left: 254px; top: 26px; bottom: 0; width: 89px; border-right: 2px solid #8152b9; }
.rb::before { content: ""; position: absolute; left: -3px; top: -1px; width: 5px; height: 3px; background: #8152b9; }
.rf { left: 605px; top: 77px; width: 217px; height: 28px; border: 2px solid #c0303b; }
.rf b { position: absolute; width: 5px; height: 5px; background: #c0303b; outline: 1px solid #fff; }
.rf b:nth-child(1) { left: -3px; top: -3px; }
.rf b:nth-child(2) { right: -3px; top: -3px; }
.rf b:nth-child(3) { left: -3px; bottom: -3px; }
.rf b:nth-child(4) { right: -3px; bottom: -3px; }
.rg { left: 825px; top: 77px; width: 86px; height: 28px; border: solid #217346; border-width: 2px 0; }
.rg::after { content: ""; position: absolute; right: -1px; bottom: -3px; width: 4px; height: 4px; background: #217346; }
.hint { position: absolute; left: 335px; top: 3px; min-width: 271px; height: 25px; padding: 0 6px; line-height: 20px; background: #fff; border: 1px solid #bebebe; box-shadow: 1px 2px 2px #0003; color: #555; white-space: nowrap; }
.vscroll { display: flex; flex-direction: column; width: 25px; padding: 2px 3px 0; }
.vscroll button, .hscroll button { justify-content: center; width: 19px; height: 19px; background: #fdfdfd; border: 1px solid #c6c6c6; }
.vscroll .thumb { flex: 1; padding-bottom: 26px; background: linear-gradient(#fff, #fff) content-box, #dadada; border: 1px solid #ababab; border-bottom: 0; }

/* sheet tabs */
.sheets { display: flex; align-items: flex-start; height: 29px; border-bottom: 1px solid #b5b5b5; font-size: 17px; }
.nav-arrows { display: flex; gap: 25px; width: 104px; padding: 9px 0 0 27px; }
.nav-arrows .left { border-right-color: #bbb; }
.nav-arrows .right { border-left-color: #bbb; }
.st { position: relative; height: 26px; padding: 0 12px 5px; }
.st::after { content: ""; position: absolute; right: 0; top: 4px; width: 1px; height: 20px; background: #9b9b9b; }
.st.red { height: 23px; margin: 2px 4px 0 2px; padding: 0 13px 6px 10px; background: #993300; color: #fff; }
.st.red::after { right: -4px; }
.st.on { background: #fff; color: #217346; border-bottom: 2px solid #217346; padding: 0 12px 3px; }
.st.on::after { display: none; }
.st.long { min-width: 127px; }
.add { margin: 4px 0 0 33px; }
.sheets .dots { margin: 7px 15px 0 auto; }
.hscroll { display: flex; width: 728px; margin: 4px 25px 0 0; background: #dadada; }
.hscroll .thumb { flex: 1; margin-right: 39px; background: #fff; border: 1px solid #ababab; }

/* status bar */
.status { display: flex; align-items: center; gap: 20px; height: 27px; padding: 0 8px 1px; background: #f1f1f1; }
.view-btns { display: flex; gap: 28px; margin: 0 228px 0 auto; }

/* taskbar */
.taskbar { display: flex; align-items: center; height: 50px; padding-left: 20px; background: #d5d5d5; color: #000; }
.t-find { margin-left: 36px; }
.t-view { margin-left: 35px; }
.websearch { display: flex; align-items: center; width: 275px; height: 43px; margin: 0 8px 3px 19px; padding-left: 8px; background: #fff; }
.websearch .up { border-width: 0 4px 5px; border-bottom-color: #999; margin: 0 7px 0 3px; }
.websearch input { flex: 1; min-width: 0; font-size: 16px; }
.websearch button { justify-content: center; width: 70px; height: 43px; background: #2188ff; color: #fff; }
.grip { width: 5px; height: 26px; border: solid #000; border-width: 0 1px; margin-right: 17px; }
.app { flex: none; justify-content: center; width: 51px; height: 50px; margin-right: 6px; border: solid transparent; border-width: 3px 0; }
.app.edge { margin-right: 12px; }
.app.run { border-bottom-color: #0078d7; }
.app.active { width: 62px; background: #eee; border-top-color: #eee; }
.tray { display: flex; align-items: center; gap: 12px; height: 50px; margin-left: auto; }
.p-people { margin-right: 16px; }
.p-pen { margin-left: 4px; }
.p-lang { font-size: 20px; line-height: 24px; color: #777; }
.p-sogou { margin-left: 3px; }
.tray time { font-size: 16px; line-height: 20px; width: 80px; margin-left: 8px; text-align: center; }
.p-play { margin-left: 11px; }
.p-note { margin-left: 18px; }
.desk { width: 6px; height: 50px; margin-left: 12px; border-left: 1px solid #999; }

/* floating load meter */
.meter { position: absolute; right: 108px; bottom: 87px; display: flex; align-items: center; height: 86px; }
.blob { position: relative; z-index: 1; margin-right: -20px; }
.load { position: absolute; z-index: 2; left: 0; width: 82px; text-align: center; font: 300 28px/40px "Open Sans", sans-serif; color: #444; padding-top: 3px; }
.load small { font-size: 15px; font-weight: 600; }
.pill { display: grid; grid-template-columns: 14px 37px 20px; column-gap: 8px; row-gap: 4px; align-items: center; width: 122px; height: 50px; margin-top: 4px; padding: 2px 8px 2px 24px; border-radius: 0 25px 25px 0; background: #f8f8f8; box-shadow: 0 1px 4px #0005; font-size: 12px; line-height: 18px; }
.net { text-align: right; color: #000; }
.cpu { grid-column: 1 / 3; grid-row: 2; color: #666; white-space: nowrap; }
.cpu b { font-weight: 400; color: #18cf60; }
.pill button { grid-column: 3; grid-row: 1 / 3; }

/* input method bar */
.ime { position: absolute; right: 1px; bottom: 50px; display: flex; align-items: center; gap: 12px; height: 32px; padding: 0 5px; background: #fff; border: 1px solid #b9cfec; color: #0a6cd8; }
.ime .logo { margin: -6px 0 0 -12px; }
.ime .zh { font-size: 18px; font-weight: 700; margin: 0 3px 0 -4px; }
```

FILE: sheet.js
```js
const cards = [
  '6223888811112222678', '3223444488887777212', '8273111177772222663', '9912333822271839992',
  '6222027789228918276', '4550202033399192837', '6200304401965436344', '6228712298443094323',
  '8273111177772222663', '6223888811112222223', '4300320010002938192', '4200192837465738291',
  '9912333822271839992'
];
const uniqueCards = [...new Set(cards)];
const duplicates = new Set([2, 11]);
const columns = 'ABCDEFGHIJKLMNOPQR'.split('');
// headings that lie beneath the function hint stay blank
const underHint = new Set(['C', 'D', 'E']);
const rowCount = 25;

function cell(col, row) {
  const card = cards[row - 2];
  let cls = '';
  let text = '';
  if (col === 'A') {
    cls = 'a';
    text = row === 1 ? '银行卡号' : card || '';
  } else if (col === 'B') {
    cls = 'b';
    text = row === 1 ? '存入金额' : card ? '1000' : '';
  } else if (col === 'F') {
    text = row === 2 ? '银行卡号' : uniqueCards[row - 3] || '';
  } else if (col === 'G' && row === 2) {
    text = '金额统计';
  }
  if (/^\d{19}$/.test(text)) cls += ' txt';
  if (col === 'A' && duplicates.has(row) || col === 'F' && row === 11) cls += ' dup';
  if (col === 'F' && row === 3) cls += ' pick';
  return `<td class="${cls}">${text}</td>`;
}

let html = '<colgroup><col class="c-head">';
columns.forEach(c => { html += `<col class="${c === 'A' || c === 'F' ? 'c-wide' : 'c-std'}">`; });
html += '<col></colgroup><thead><tr><th class="corner"><i></i></th>';
columns.forEach(c => {
  html += `<th${c === 'G' ? ' class="hot"' : ''}>${underHint.has(c) ? '' : c}</th>`;
});
html += '<th></th></tr></thead><tbody>';
for (let row = 1; row <= rowCount + 1; row++) {
  html += `<tr><th${row === 3 ? ' class="hot"' : ''}>${row <= rowCount ? row : ''}</th>`;
  columns.forEach(c => {
    if (row === 3 && c === 'G') html += '<td class="edit" colspan="3">=SUMIF(A:A,F3&amp;"*",B:B)</td>';
    else if (row === 3 && (c === 'H' || c === 'I')) return;
    else html += cell(c, row);
  });
  html += '<td></td></tr>';
}
document.getElementById('cells').innerHTML = html + '</tbody>';
```
